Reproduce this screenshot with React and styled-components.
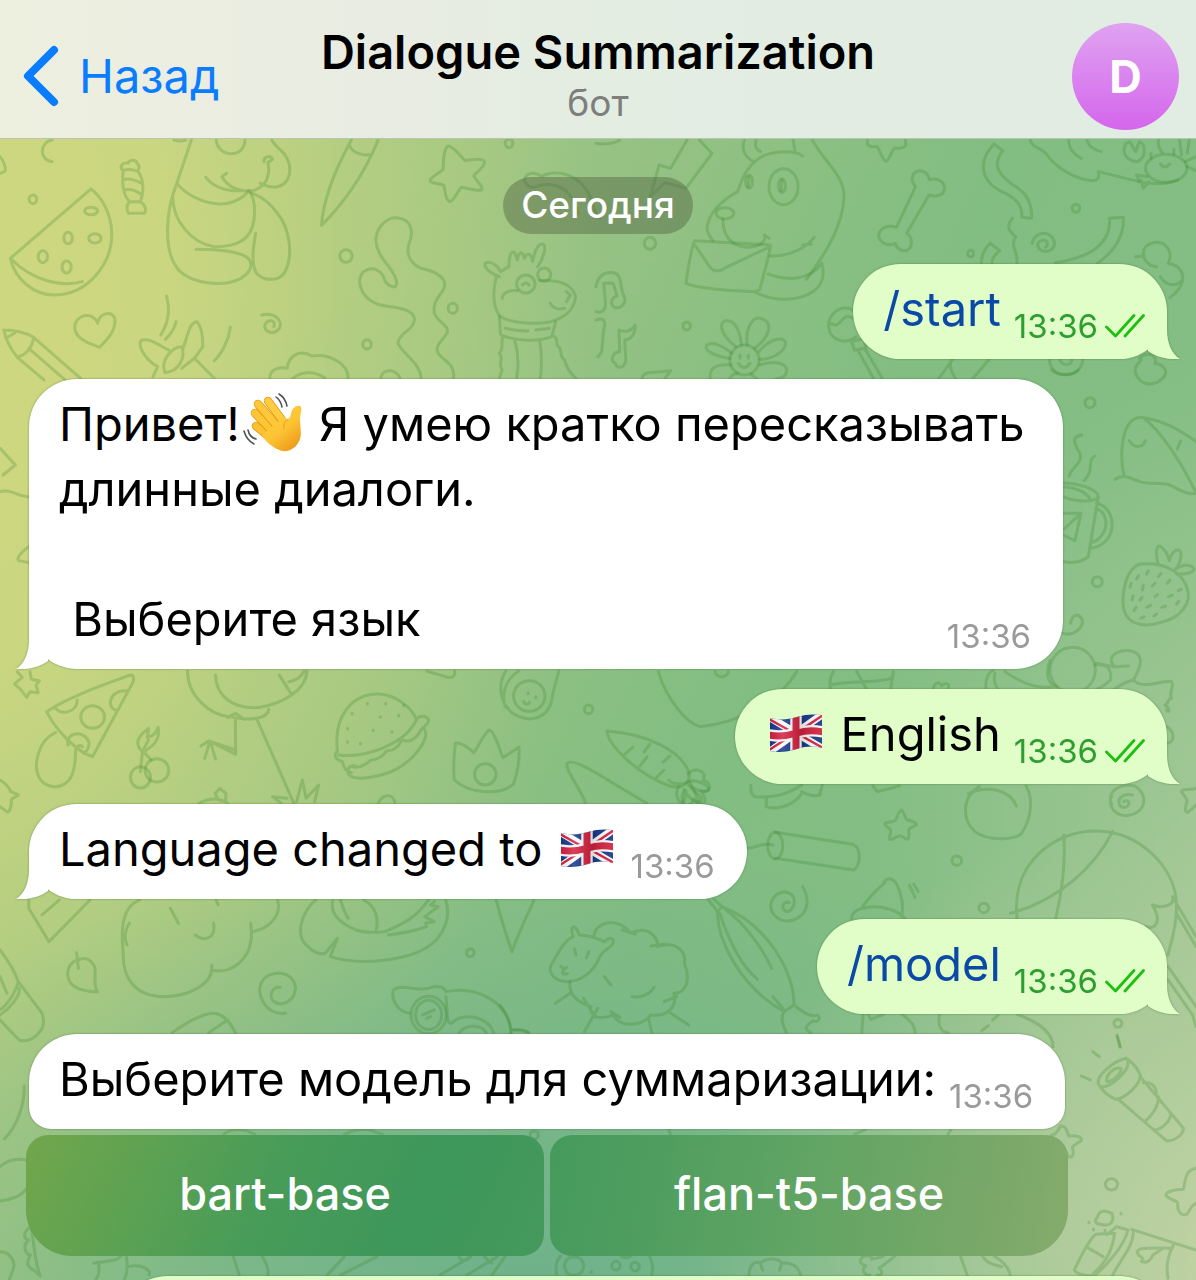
import React from "react";
import styled, { createGlobalStyle } from "styled-components";

const GlobalStyle = createGlobalStyle`
  *, *::before, *::after { box-sizing: border-box; }
  html, body { margin: 0; height: 100%; }
  body {
    font-family: Inter, Roboto, "Liberation Sans", sans-serif;
    color: #000;
    overflow: hidden;
  }
  button { font: inherit; border: 0; background: none; padding: 0; cursor: pointer; }
  p, h1 { margin: 0; }
`;

const Screen = styled.div`
  position: relative;
  display: flex;
  flex-direction: column;
  height: 100vh;
  overflow: hidden;
  background:
    radial-gradient(ellipse 50% 36% at 108% 98%, #c6d4a5 0%, rgba(190, 209, 162, 0.75) 40%, rgba(175, 205, 155, 0) 100%),
    radial-gradient(ellipse 34% 36% at 106% 64%, rgba(176, 204, 158, 0.75) 0%, rgba(165, 202, 150, 0) 100%),
    radial-gradient(ellipse 62% 36% at 44% 100%, #6fb28b 0%, rgba(120, 182, 138, 0) 100%),
    radial-gradient(ellipse 56% 86% at -6% 22%, #cfd87f 0%, #cad680 36%, rgba(190, 210, 128, 0.65) 62%, rgba(160, 199, 130, 0) 100%),
    linear-gradient(115deg, #b4ce80 0%, #98c384 36%, #82bd82 60%, #86bf86 100%);
`;

const Wallpaper = styled.svg`
  position: absolute;
  inset: 0;
  width: 100%;
  height: 100%;
  fill: none;
  stroke: rgba(55, 130, 40, 0.25);
  stroke-width: 3;
  stroke-linecap: round;
  stroke-linejoin: round;
  pointer-events: none;

  path, ellipse { vector-effect: non-scaling-stroke; }
`;

const Header = styled.header`
  position: relative;
  display: grid;
  grid-template-columns: 1fr auto 1fr;
  align-items: center;
  height: 139px;
  flex: none;
  padding: 14px 17px 0;
  background: linear-gradient(90deg, #edefdf 0%, #e9ece2 32%, #e3ede2 52%, #e1ece2 100%);
  border-bottom: 1px solid #b9c4b6;
`;

const BackButton = styled.button`
  display: flex;
  align-items: center;
  justify-self: start;
  gap: 19px;
  padding-left: 5px;
  color: #0a7cff;
  font-size: 47px;
  line-height: 60px;
`;

const TitleBlock = styled.div`
  text-align: center;
`;

const Title = styled.h1`
  font-size: 47px;
  font-weight: 600;
  line-height: 54px;
`;

const Subtitle = styled.p`
  font-size: 37px;
  line-height: 48px;
  color: #7c7f7c;
`;

const Avatar = styled.button`
  justify-self: end;
  width: 107px;
  height: 107px;
  border-radius: 50%;
  background: linear-gradient(180deg, #dfa3f1 0%, #d566ec 100%);
  color: #fff;
  font-size: 45px;
  font-weight: 700;
  line-height: 107px;
`;

const Chat = styled.main`
  position: relative;
  flex: 1;
  display: flex;
  flex-direction: column;
  align-items: flex-start;
  gap: 20px;
  min-height: 0;
  padding: 38px 29px 0;
  overflow: hidden;

  > * { flex: none; }
`;

const DatePill = styled.div`
  align-self: center;
  margin-bottom: 10px;
  padding: 0 18px;
  border-radius: 29px;
  background: rgba(86, 102, 68, 0.46);
  color: #fff;
  font-size: 37px;
  font-weight: 500;
  line-height: 56px;
  padding-bottom: 1px;
`;

const Bubble = styled.article`
  position: relative;
  display: ${(p) => (p.$long ? "grid" : "flex")};
  align-items: flex-end;
  gap: 13px;
  align-self: ${(p) => (p.$out ? "flex-end" : "flex-start")};
  max-width: ${(p) => (p.$long ? "1034px" : "100%")};
  min-height: 95px;
  padding: ${(p) => (p.$out ? "12px 22px 18px 30px" : "12px 32px 18px 30px")};
  border-radius: ${(p) => (p.$docked ? "48px 48px 22px 22px" : "48px")};
  background: ${(p) => (p.$out ? "#e1fec8" : "#fff")};
  filter: drop-shadow(0 0 1px rgba(50, 100, 40, 0.55));
`;

const NextBubble = styled(Bubble)`
  width: 92%;
`;

const Text = styled.p`
  font-size: 47px;
  line-height: 65px;
  white-space: pre-wrap;
  ${Bubble}[data-long] > & { grid-area: 1 / 1; }
`;

const Command = styled.a`
  color: #0a49a6;
  text-decoration: none;
`;

const Meta = styled.span`
  display: flex;
  align-items: center;
  gap: 7px;
  font-size: 33px;
  line-height: 30px;
  color: ${(p) => (p.$out ? "#2f9e31" : "#9a9a9a")};
  ${Bubble}[data-long] > & { grid-area: 1 / 1; justify-self: end; }
`;

const Tail = styled.svg`
  position: absolute;
  bottom: 0;
  width: 32px;
  height: 48px;
  ${(p) => (p.$out ? "right: -13px; fill: #e1fec8;" : "left: -13px; fill: #fff;")}
`;

const InlineArt = styled.svg`
  display: inline-block;
  width: ${(p) => p.$w}px;
  height: ${(p) => p.$h}px;
  vertical-align: ${(p) => p.$drop}px;
  margin: 0 ${(p) => p.$gap}px;
`;

const BotMessage = styled.div`
  display: flex;
  flex-direction: column;
  gap: 6px;
  max-width: 100%;
`;

const Keyboard = styled.div`
  display: grid;
  grid-template-columns: 1fr 1fr;
  gap: 6px;
  margin: 0 -3px;
`;

const KeyButton = styled.button`
  height: 121px;
  padding-bottom: 4px;
  color: #fff;
  font-size: 45px;
  font-weight: 500;
  border-radius: ${(p) => (p.$last ? "22px 22px 46px 22px" : "22px 22px 22px 46px")};
  background: ${(p) =>
    p.$last
      ? "linear-gradient(100deg, #459a5c 0%, #4f9e5f 20%, #63a564 52%, #73a768 75%, #85ab6c 100%)"
      : "linear-gradient(115deg, #72a64b 0%, #5ea252 22%, #499c58 45%, #3d975b 75%, #46995c 100%)"};
`;

const Checks = () => (
  <svg width="40" height="24" viewBox="0 0 40 24" fill="none" stroke="#1fbf12" strokeWidth="2.8" strokeLinecap="round" strokeLinejoin="round" aria-hidden="true">
    <path d="M1.5 13 L10.5 22 L29 1.500" />
    <path d="M20 22 L38.500 1.500" />
  </svg>
);

const BubbleTail = ({ out }) => (
  <Tail $out={out} viewBox="0 0 32 48" aria-hidden="true">
    <path d={out ? "M0 0 H19 V18 C19 33 24 43 32 48 C20 49 8 46 0 40 Z" : "M32 0 H13 V18 C13 33 8 43 0 48 C12 49 24 46 32 40 Z"} />
  </Tail>
);

const Flag = () => {
  const id = React.useId();
  const shape = "M1 4 C10 6 18 6 28 3 C37 0 45 0 53 1 V34 C45 32 37 32 28 35 C18 38 10 39 1 37 Z";
  return (
    <InlineArt $w={54} $h={39} $drop={-2} $gap={4} viewBox="0 0 54 39" role="img" aria-label="UK flag">
      <defs>
        <clipPath id={id}><path d={shape} /></clipPath>
        <linearGradient id={id + "s"} x1="0" x2="1">
          <stop offset="0" stopColor="#000" stopOpacity=".08" />
          <stop offset=".25" stopColor="#fff" stopOpacity=".14" />
          <stop offset=".6" stopColor="#000" stopOpacity=".14" />
          <stop offset="1" stopColor="#fff" stopOpacity=".08" />
        </linearGradient>
      </defs>
      <g clipPath={`url(#${id})`} fill="none">
        <rect width="54" height="39" fill="#173a8c" />
        <path d="M0 3 L54 35 M0 38 L54 0" stroke="#fff" strokeWidth="7.500" />
        <path d="M0 5 L25 19 M54 34 L29 20 M0 36 L25 20 M54 1 L29 18" stroke="#d6213f" strokeWidth="2.400" />
        <path d="M27 0 V39 M0 21 C10 23 18 22 28 19 C37 16 45 16 54 18" stroke="#fff" strokeWidth="11.500" />
        <path d="M27 0 V39 M0 21 C10 23 18 22 28 19 C37 16 45 16 54 18" stroke="#d6213f" strokeWidth="7" />
        <rect width="54" height="39" fill={`url(#${id}s)`} />
      </g>
    </InlineArt>
  );
};

const WavingHand = () => (
  <InlineArt $w={60} $h={60} $drop={-12} $gap={3} viewBox="0 0 60 60" role="img" aria-label="waving hand">
    <defs>
      <linearGradient id="skin" x1="0" y1="0" x2="0.700" y2="1">
        <stop offset="0" stopColor="#ffd044" />
        <stop offset=".6" stopColor="#fdc434" />
        <stop offset="1" stopColor="#ee9c1c" />
      </linearGradient>
    </defs>
    <g fill="none" strokeLinecap="round">
      <path d="M13 33 L30 47" stroke="#e2930f" strokeWidth="8.400" />
      <path d="M13 33 L30 47" stroke="#fbc02f" strokeWidth="7" />
      <path d="M12 20 L32 41" stroke="#e2930f" strokeWidth="8.600" />
      <path d="M12 20 L32 41" stroke="#fcc536" strokeWidth="7.200" />
      <path d="M15 11 L36 35" stroke="#e2930f" strokeWidth="8.600" />
      <path d="M15 11 L36 35" stroke="#fdc93b" strokeWidth="7.200" />
      <path d="M25 8 L42 31" stroke="#e2930f" strokeWidth="8.400" />
      <path d="M25 8 L42 31" stroke="#fecc40" strokeWidth="7" />
    </g>
    <path d="M24 38 L41 24 C45 28 47 26 48 21 C49 15 53 12 57 13 C60 15 57 20 57 27 C57 34 59 39 57 46 C54 55 46 59 39 58 C31 56 23 49 19 43 Z" fill="url(#skin)" />
    <path d="M45 26 C41 29 40 32 41 36" fill="none" stroke="#e9a11c" strokeWidth="1" strokeLinecap="round" />
    <g fill="none" stroke="#4b4e52" strokeWidth="1.500" strokeLinecap="round">
      <path d="M33 4 C36 6 38 9 39 14" />
      <path d="M36 1 C41 4 43 8 44 13" />
      <path d="M5 37 C6 42 9 45 13 46" />
      <path d="M1 38 C3 45 7 49 11 51" />
    </g>
  </InlineArt>
);

/* Each sheet holds line drawings for one part of the wallpaper, in its own units. */
const sheets = [
  {
    t: "translate(0 0) scale(.3827 .3333)",
    d: [
      "M136 420 C105 425 100 480 136 485 M0 470 C8 480 18 505 12 515 L0 520",
      "M322 512 C310 500 320 485 334 490 C340 478 355 478 358 490 C368 498 362 508 360 514 C340 505 330 508 322 512 C318 550 322 590 340 605 C330 612 330 630 336 640 L378 640 C384 628 378 612 366 606 C380 570 372 530 360 514 M322 540 C340 530 360 545 370 550 M324 570 C345 565 360 575 370 585 M340 605 H366",
      "M238 567 L27 775 C40 840 90 885 140 885 C230 885 295 790 292 695 C290 640 265 590 238 567 M27 775 C90 850 170 860 215 845",
      "M500 420 L462 550 C430 640 430 750 460 800 C490 850 580 865 630 835 C670 805 660 770 620 760 C590 750 550 748 512 748 M462 550 C490 590 540 612 575 612 C610 612 640 590 650 572 C672 600 670 680 645 710 C620 740 580 740 560 740 C500 730 450 660 452 590",
      "M668 700 C662 740 655 790 670 820 C690 845 730 845 745 815 C765 770 760 690 725 640 C705 608 685 590 655 578 M710 420 C720 440 735 450 745 465 C765 500 762 555 720 562 C700 562 690 555 680 550 M690 485 C688 468 710 465 712 478 L700 488 C706 520 700 560 660 572 C620 575 595 560 580 530 L592 520 M538 532 C560 565 600 575 640 572 M565 420 C570 475 640 475 640 420 M455 420 q15 6 30 0",
      "M918 420 C880 500 845 590 840 676 C890 620 950 530 988 420 M915 440 C925 460 950 468 968 464",
      "M1172 438 C1185 440 1205 470 1215 482 C1240 478 1265 472 1266 488 C1264 505 1240 520 1238 528 C1245 545 1265 560 1258 570 C1245 575 1215 562 1205 562 C1195 575 1185 605 1175 605 C1163 600 1163 570 1160 556 C1145 550 1122 550 1124 540 C1130 528 1150 518 1158 508 C1158 490 1160 440 1172 438",
      "M1370 540 C1375 515 1400 515 1415 530 C1450 505 1520 520 1545 600 C1555 640 1560 650 1568 655 M1400 560 C1440 545 1490 550 1510 640 M1370 540 C1375 560 1390 565 1400 560",
      "M1100 1135 C1100 1090 1050 1060 1040 1030 C1040 1000 1085 990 1083 955 C1075 920 1020 925 985 912 C940 890 930 840 950 815 C975 795 1000 815 1005 840 C1015 862 1040 870 1036 845 C1030 800 985 780 982 720 C985 670 1020 650 1040 654 C1080 660 1080 700 1068 735 C1062 760 1070 790 1100 805 C1140 815 1170 835 1160 865 C1150 890 1130 900 1135 940 C1145 970 1175 975 1168 1000 C1155 1025 1135 1035 1145 1060 C1160 1085 1190 1090 1185 1135",
      "M1305 830 C1290 825 1262 805 1268 790 C1280 780 1300 795 1308 815 M1308 815 L1330 800 C1330 770 1335 750 1345 758 L1352 780 C1355 755 1365 750 1370 775 C1378 755 1388 760 1392 785 C1395 760 1405 730 1418 732 C1430 740 1420 775 1405 800 M1297 830 C1285 880 1290 930 1308 950 C1330 968 1400 975 1440 965 C1480 950 1500 930 1504 890 C1495 850 1460 840 1410 842 M1312 895 C1315 875 1335 870 1352 872 M1480 875 L1490 885 L1480 905 M1438 910 C1445 925 1455 930 1475 925 M1365 855 q8 -12 18 0",
      "M1305 950 L1308 1005 C1350 1025 1410 1025 1442 1010 L1452 965 M1320 985 C1350 993 1370 993 1380 993 M1400 990 L1435 985 M1315 1010 C1305 1030 1320 1040 1305 1060 C1318 1075 1300 1095 1312 1110 L1305 1135 M1345 1020 C1355 1060 1355 1100 1350 1135 M1410 1020 C1416 1060 1416 1100 1412 1135 M1450 1010 C1460 1020 1450 1035 1460 1040 C1470 1050 1460 1070 1475 1080 C1480 1100 1490 1120 1505 1135",
      "M255 970 C245 935 200 940 195 980 C195 1015 230 1030 260 1042 C280 1020 305 990 300 955 C290 930 260 940 255 970",
      "M684 945 C720 935 740 965 730 985 C718 1005 690 1000 692 975 C700 955 722 960 716 980",
      "M10 990 C40 990 70 1000 88 1012 C85 1040 70 1065 45 1072 C30 1050 15 1020 10 990 M88 1012 L215 1140 M45 1072 L115 1140 M75 1045 L170 1140 M15 1015 L38 1000",
      "M400 1130 L412 1100 C380 1080 360 1040 368 1022 C390 1010 420 1040 440 1050 M430 1115 C420 1080 450 1040 475 1040 C485 1070 470 1115 430 1118 M478 1045 C490 1010 495 965 515 965 C530 985 530 1030 530 1040 L508 1075 L475 1105 M508 1075 L560 1135 M435 888 C445 930 440 970 420 1005 M460 965 C455 990 445 1005 432 1018 M602 982 C598 1020 580 1060 560 1082",
      "M705 1135 C705 1110 725 1100 750 1105 C755 1060 790 1050 815 1068 C860 1060 910 1090 910 1135 M765 1135 C785 1115 820 1110 850 1135 M995 1135 C1000 1100 1040 1110 1045 1135",
    ],
    e: [[86, 598, 10, 13], [238, 633, 17, 11], [178, 714, 11, 17], [248, 715, 16, 14], [112, 770, 12, 18], [174, 801, 12, 18], [1330, 430, 10, 13], [904, 768, 16, 19], [1183, 925, 12, 15], [959, 1033, 11, 14], [1374, 852, 24, 27], [1422, 824, 17, 20]],
  },
  {
    t: "translate(596 0) scale(.3827 .3333)",
    d: [
      "M0 430 C20 435 50 430 62 420 M238 420 L195 505 L165 495 L142 590 M270 420 L303 460 L235 565 L180 548 L142 590",
      "M540 468 C520 450 450 450 420 480 C385 510 375 560 370 575 C330 600 290 640 290 690 C295 705 300 715 305 722 M332 657 C330 700 350 740 395 742 C430 740 445 725 440 705 L452 715 M455 768 C500 770 550 745 570 712 M540 735 L562 732 M565 420 C600 490 650 530 648 590 C645 680 600 760 550 838 M412 485 C385 470 380 440 388 420 M430 455 C415 445 415 435 418 420 M515 420 L520 452 M400 530 L398 560 M486 540 L484 572",
      "M258 722 L455 735 C460 735 430 860 428 868 C424 875 400 875 380 873 C330 870 260 862 235 850 C240 810 250 740 258 722 M258 735 L300 805 C312 818 330 812 340 802 L455 740 M450 822 C500 845 560 840 590 790 C600 830 590 870 540 890 C500 905 450 898 415 876",
      "M710 420 C705 440 715 440 735 440 C745 460 750 484 758 484 C768 480 770 455 780 445 C800 445 815 445 808 420",
      "M835 560 C820 540 825 515 845 512 C865 512 870 530 872 540 C895 530 915 550 910 570 C905 590 885 590 870 585 L812 700 C825 710 830 735 815 750 C800 757 785 745 782 730 C765 740 740 730 738 705 C745 680 765 675 785 682 Z",
      "M1040 432 L1063 452 C1030 500 1060 530 1090 555 C1130 580 1140 620 1138 655 L1113 652 C1115 610 1090 590 1060 575 C1000 540 1000 480 1040 432",
      "M1135 420 C1135 440 1165 445 1175 460 C1200 500 1250 540 1300 542 C1315 540 1315 525 1312 515 L1420 545 M1235 420 C1235 445 1250 465 1268 475 M1283 420 C1285 435 1300 450 1320 455",
      "M1385 430 C1370 460 1390 485 1415 485 C1440 470 1435 430 1420 425 L1410 455 L1395 425 Z M1475 492 q12 18 24 0 M1540 485 L1568 470 M1545 500 L1568 512 M1440 530 L1412 525 L1420 545 M1425 540 L1430 565 L1445 545 M1420 545 C1460 555 1490 555 1520 540 M1550 420 L1545 460 M1470 420 C1465 440 1475 450 1480 458 M1525 420 l5 45 M1450 475 v-15 M1510 462 v-15",
      "M1342 655 L1378 652 C1380 700 1360 750 1310 790 M1342 655 C1345 720 1310 770 1200 788 M1088 655 C1070 680 1080 695 1097 710 C1080 740 1105 760 1100 788 M1030 730 L1055 752 C1040 765 1035 775 1035 790 M1030 730 C1015 745 1008 765 1007 788",
      "M1140 730 C1145 690 1195 690 1198 730 C1195 765 1150 760 1155 730 C1165 710 1190 725 1175 742",
      "M1465 800 C1430 800 1415 745 1450 730 C1490 715 1510 760 1495 790 C1540 800 1550 850 1500 893 M1410 770 L1432 768 M1475 830 C1490 860 1520 860 1532 840",
      "M0 860 C5 830 20 815 45 818 C70 822 60 860 75 895 C78 915 60 930 45 920 C35 905 45 890 55 888 L45 850 L20 850 L25 910 C25 935 10 940 0 935 M0 960 C25 950 25 970 20 990 C15 1030 20 1060 5 1070 M50 1090 C35 1080 45 1055 62 1055 L60 990 C80 1000 95 990 102 975 C105 1000 90 1020 75 1020 L78 1080 C75 1105 55 1108 50 1090 M120 1135 C125 1110 150 1120 195 1112 L180 1135",
      "M365 1040 C320 1000 320 960 345 962 C370 965 378 1010 380 1035 M395 1035 C390 980 410 950 430 955 C465 965 455 1010 415 1045 M425 1055 C460 1010 495 1010 495 1030 C495 1060 450 1080 428 1078 M428 1095 C470 1080 500 1090 498 1115 C495 1135 480 1136 470 1136 M350 1075 C310 1070 280 1050 290 1035 C310 1020 345 1050 355 1060 M352 1095 C315 1090 295 1105 298 1136 M370 1120 q-20 5 -20 16 M405 1122 l15 14 M372 1090 q15 25 30 0 M376 1065 v10 M398 1065 v10",
      "M690 985 C690 920 650 915 625 935 C600 960 600 1010 640 1022 C655 1025 670 1020 680 1010 M612 970 C640 990 640 945 660 950 C672 955 680 960 688 955 M668 1025 L700 1015 L705 1045 L675 1050 Z M685 1052 L725 1135 M702 1045 L748 1135",
      "M895 1135 C915 1110 925 1085 935 1075 M930 1075 C920 1100 930 1120 940 1135 M1030 1075 L985 1135 M1185 1077 C1185 1140 1270 1140 1272 1077 M1212 1077 C1215 1100 1245 1100 1243 1077 M1420 1075 C1440 1050 1470 1070 1460 1090 C1490 1095 1495 1120 1480 1135 C1460 1160 1430 1155 1418 1136 C1405 1120 1405 1100 1425 1080",
    ],
    e: [[337, 640, 23, 17], [490, 560, 38, 54], [400, 545, 9, 20], [486, 557, 9, 21], [141, 730, 15, 18], [237, 978, 10, 12], [979, 761, 8, 10], [1254, 625, 10, 12], [1490, 505, 54, 42], [388, 1080, 38, 45]],
  },
  {
    t: "translate(0 370) scale(.3827 .3333)",
    d: ["M0 235 L40 285 L8 315 M0 365 C30 355 45 380 75 380 M75 530 C55 545 40 570 50 572 L75 578"],
    e: [],
  },
  {
    t: "translate(700 370) scale(.3333)",
    d: [
      "M1055 0 C1070 18 1120 18 1135 0",
      "M1145 195 C1110 200 1125 225 1140 250 C1150 280 1115 290 1108 318 M1185 258 C1160 270 1185 300 1152 332",
      "M1089 338 C1130 340 1190 355 1195 378 C1190 400 1120 395 1089 380 M1089 350 C1130 352 1165 370 1172 392 M1195 380 L1165 560 C1145 578 1110 580 1089 575 M1190 398 C1260 420 1250 530 1168 535 M1187 415 C1235 430 1225 505 1172 518 M1089 430 L1143 430 L1125 512 L1089 495 M1143 430 L1089 480",
      "M1272 318 C1260 260 1260 150 1320 142 C1390 150 1440 180 1488 215 M1330 142 C1400 200 1450 290 1488 368 M1245 328 C1270 310 1290 325 1320 335 C1350 345 1380 335 1410 345 C1440 360 1460 375 1488 370 M1288 212 C1300 235 1330 235 1336 212 M1442 213 L1432 237",
      "M1320 582 C1270 600 1265 690 1272 720 C1285 770 1340 770 1380 758 C1440 745 1480 700 1460 650 C1445 610 1400 575 1320 582 M1375 582 C1365 550 1370 525 1380 528 C1400 540 1405 560 1408 572 C1415 545 1435 530 1443 548 C1445 570 1435 590 1425 598 C1450 580 1480 582 1482 600 C1470 615 1445 612 1430 612",
      "M1310 627 l6 -10 M1340 612 l5 -9 M1375 620 l8 -9 M1290 652 l4 -12 M1327 660 l3 -14 M1357 648 l8 -8 M1402 640 l8 -10 M1297 690 l2 -12 M1320 690 l6 -8 M1365 680 l8 -6 M1405 680 l12 -4 M1435 662 l8 -4 M1302 722 l6 -10 M1340 712 l12 -6 M1385 712 l12 -4 M1430 702 l6 -8 M1322 745 l10 -4 M1362 738 l8 -6",
      "M1089 790 C1120 800 1150 775 1147 750 C1135 725 1115 735 1112 760 M1185 885 C1225 880 1235 900 1232 930 C1215 945 1200 955 1190 958 M1190 880 L1240 890 L1285 888 M1240 885 C1220 860 1250 840 1290 842 C1330 850 1330 880 1300 930 C1260 940 1250 955 1240 960 M1300 930 C1330 960 1380 930 1415 935 C1425 950 1405 965 1415 985 C1400 985 1410 1000 1395 1005 C1415 1020 1405 1030 1400 1020 M1050 870 C1040 900 1035 940 1070 950 M1400 1070 C1425 1085 1425 1115 1402 1120 M915 905 C950 930 1000 960 1060 950",
      "M858 958 C855 930 865 905 880 902 M885 910 C880 930 885 945 895 958 M400 905 C385 930 390 950 392 958 M390 945 C450 930 530 940 575 925 M470 905 L500 958 M580 905 L572 958 M700 955 C705 935 720 935 725 948 C735 935 750 940 745 956 M45 905 C50 925 80 925 85 905 M290 905 C240 990 120 1060 0 1070 C-40 1060 -100 990 -125 905",
    ],
    e: [[1170, 98, 15, 15], [1192, 635, 15, 15], [1118, 900, 68, 68]],
  },
  {
    t: "translate(600 720)",
    d: [
      "M7 11 C8 25 38 55 70 66 C84 70 92 62 88 50 C80 32 50 14 7 11 M24 35 l9 -8 M40 46 l7 -9 M56 58 l8 -8 M50 24 l-6 8 M70 36 l-7 6",
      "M88 54 C96 46 108 52 103 60 C114 64 110 74 101 71 C110 82 102 90 94 79 C88 92 78 84 84 70 M90 62 L100 84",
    ],
    e: [],
  },
  {
    t: "translate(0 660) scale(.3827 .3333)",
    d: [
      "M45 35 L58 52 L38 72 L52 86 L70 112 L78 95 L100 98 L94 76 L103 62 L82 58 L78 35",
      "M122 155 C180 110 270 75 340 45 C352 45 350 60 346 70 L242 290 C200 275 145 210 122 155 M145 145 C160 165 200 160 202 120 M330 92 C280 90 280 150 305 150 M178 255 C170 215 220 210 232 245 C235 265 225 275 218 280 M145 218 C100 240 90 310 98 340 C110 390 170 395 188 345 C200 310 195 290 198 270 C200 255 210 255 215 260",
      "M367 335 L372 275 C350 250 360 230 388 205 L385 232 C400 228 410 215 413 202 C420 240 400 260 375 275 L395 300 M372 275 L388 240",
      "M490 33 C490 110 550 165 600 170 C640 182 700 180 702 148 M563 45 C565 110 610 150 680 142 C740 130 800 90 802 33 M755 65 C780 60 790 45 795 33 M760 100 L730 45 M615 180 L616 283 L550 245 M616 270 L545 243 L525 258 M548 245 L535 295 M550 245 L563 297 M595 172 L615 160 L638 178 M672 180 L768 430",
      "M735 430 L712 410 L750 415 M775 425 L790 360 L800 415 L833 375 L822 425 M520 430 C545 415 570 410 595 430 M562 400 L575 385 L590 400 L590 425 L570 420 Z M988 430 C1000 400 1030 400 1032 430",
      "M882 275 C870 170 920 100 990 102 C1040 105 1080 150 1088 180 C1060 250 960 295 885 285 M1088 178 C1095 165 1115 165 1120 180 C1120 195 1105 200 1100 210 C1090 235 1070 250 1050 240 C1040 260 1030 275 1010 272 C1005 285 985 300 970 300 C950 320 935 325 920 320 M880 275 C870 290 880 300 895 305 C898 325 905 335 918 338 M1108 205 C1125 230 1090 290 1040 325 C1000 350 930 365 912 345 C905 330 910 315 930 318",
      "M960 130 v2 M1008 130 v2 M920 160 v2 M994 170 v2 M1042 165 v2 M908 205 v2 M975 210 v2 M1024 215 v2 M908 245 v2 M942 250 v2 M1055 135 v2",
      "M1190 250 C1185 290 1185 330 1187 360 C1230 405 1310 405 1342 372 C1352 340 1358 300 1356 262 L1314 293 C1305 265 1290 210 1278 210 C1265 220 1250 260 1238 278 C1225 262 1200 245 1190 250",
      "M1322 33 C1300 70 1305 130 1340 160 C1380 190 1430 180 1442 120 C1445 90 1455 60 1460 33 M1355 33 C1320 60 1310 100 1320 140 M1115 33 L1170 52 C1185 55 1190 45 1188 33 M1368 125 q8 14 16 2 M1380 98 v3 M1400 110 v3",
      "M1530 430 C1520 390 1475 330 1482 310 C1500 290 1570 350 1690 430 M0 360 C15 370 25 385 28 395 L48 405 L30 418 C30 440 25 455 20 457 L0 440",
      "M75 720 L75 745 L128 845 L235 720 M110 765 L155 720 M200 878 L205 925 M210 897 C175 905 170 945 185 970 C200 990 230 995 255 996 C240 975 255 930 245 915 C235 897 222 893 210 897",
      "M365 720 C320 740 315 800 322 880 C320 950 350 1010 430 1010 C490 1010 550 975 553 930 C600 945 660 900 657 815 C700 810 730 770 728 735 L725 720 M655 790 L657 815 M553 915 L553 935 M338 790 C325 810 325 840 332 855 M445 745 L466 790 M510 825 C530 845 565 840 558 790 M565 720 L570 735",
      "M746 1060 C690 1065 670 1000 682 970 C700 925 770 930 772 985 C768 1040 710 1045 708 1005 C710 985 725 980 732 982",
      "M825 720 C785 760 770 830 805 860 C830 890 845 880 850 880 L882 835 L863 890 C930 915 1080 910 1140 840 C1170 800 1175 760 1165 720 M870 720 C860 760 890 790 930 810 C960 820 1000 820 1015 810 C1080 780 1100 750 1120 720 M890 720 C895 740 900 760 910 775 M950 720 C985 740 990 780 982 815 M1015 825 C1050 820 1080 815 1115 800 L1112 790 L1135 785 L1110 770 L1145 740 L1125 735 L1135 725",
      "M1297 722 C1310 780 1330 850 1338 875 C1350 830 1380 760 1395 722",
      "M0 870 C20 900 40 940 48 965 L110 1060 C115 1080 115 1095 110 1105 C95 1135 70 1148 50 1140 L0 1080 M0 950 L18 1000 M48 965 C40 1000 15 1040 0 1050 M50 985 C55 1010 20 1050 0 1065 M450 1118 C490 1085 530 1060 560 1060 C590 1065 605 1095 615 1118 M595 1080 L545 1118",
      "M1070 1060 C1040 1055 1020 1020 1028 990 C1050 970 1090 995 1120 985 C1140 975 1160 980 1165 995 C1250 975 1330 1030 1335 1118 M1165 1010 C1170 1050 1165 1095 1180 1090 C1200 1060 1270 1060 1290 1118 M1200 1118 C1220 1090 1260 1095 1270 1118 M1340 1110 C1360 1110 1375 1115 1380 1118 M1105 1065 L1135 1050 M1115 1075 L1125 1070",
    ],
    e: [[242, 171, 31, 34], [367, 352, 26, 32], [410, 331, 31, 35], [1268, 343, 28, 32], [1383, 108, 41, 46], [1538, 148, 11, 13], [1229, 878, 10, 12], [1120, 1065, 46, 56], [1120, 1065, 34, 44]],
  },
  {
    t: "translate(500 780) scale(.4439 .3333)",
    d: [
      "M380 0 C390 15 410 15 425 5 C440 -5 470 15 470 30 C460 40 440 30 425 15 C440 40 460 50 452 65 C440 70 420 50 418 30 C420 50 415 65 410 70 C395 60 395 30 405 15",
      "M565 15 C565 30 565 45 575 50 C620 55 650 40 680 15 M680 35 C690 45 710 50 720 45 L726 15 M680 40 C660 80 620 90 600 80 L600 55 M840 18 L850 35 L900 18",
      "M1080 20 C1040 50 1040 120 1070 155 C1100 185 1160 180 1175 160 C1200 110 1200 50 1185 18 M1055 40 C1100 15 1150 30 1163 78",
      "M1378 75 C1365 30 1400 10 1430 18 C1460 40 1460 100 1410 107 C1375 105 1370 60 1378 50 M1425 45 C1390 35 1385 85 1408 82 C1425 75 1415 55 1405 65",
      "M905 90 C910 95 912 115 917 120 C925 122 938 125 938 135 C930 140 920 145 920 152 C922 165 922 178 917 178 C910 175 905 165 900 168 C890 170 885 180 878 178 C876 168 882 155 880 148 C875 142 866 138 867 130 C872 124 885 128 890 122 C895 115 898 90 905 90",
      "M555 205 C580 205 590 185 615 195 M620 157 L795 193 C812 200 815 250 798 270 L620 235",
      "M1165 415 C1150 250 1250 150 1345 153 C1440 155 1520 260 1524 370 C1525 450 1510 490 1505 525 M1270 165 C1275 250 1265 340 1252 415 M1380 155 C1340 260 1260 360 1150 400 M1470 375 C1500 390 1520 370 1515 350 L1568 470 M1470 375 C1490 420 1480 450 1455 440 M1524 400 L1568 500 M1505 560 L1568 680 M1505 600 L1560 705 L1568 740 M1568 25 C1560 30 1535 25 1535 35 L1548 60 C1545 80 1540 95 1550 97 L1568 75",
      "M682 320 C710 390 670 430 640 422 C600 410 600 345 640 335 C675 340 665 395 645 395 C630 385 640 360 652 368",
      "M865 310 C865 295 885 290 892 310 M867 308 C840 340 825 360 815 385 C790 395 792 415 792 418 M892 308 C905 340 910 380 905 410 M815 385 C860 370 900 395 912 415 M922 315 L935 352 M932 312 L942 335",
      "M470 360 L490 395 L500 380 L482 358 M490 395 C490 480 540 620 640 695 L662 675 C665 580 600 430 500 380 M495 400 C515 480 545 560 580 598 M505 385 C550 430 590 500 612 565 M615 650 L640 690 M640 695 C630 720 640 740 645 758 M662 675 C680 695 700 715 715 705 C725 715 715 730 705 722 C680 745 690 750 700 758",
      "M165 470 C155 440 170 425 178 465 C200 465 220 475 235 485 C250 465 262 480 252 495 C240 510 230 515 225 530 C210 580 180 605 150 605 C115 600 105 570 120 545 C130 520 145 480 165 470 M168 507 l3 18 M200 515 l-5 18 M137 558 L145 568 L150 562 M145 568 C135 580 145 585 152 580",
      "M212 465 C215 430 260 405 295 460 C330 435 355 465 355 500 C400 480 420 520 415 550 C430 600 420 640 392 640 C400 690 370 710 340 705 C320 740 270 745 255 705 C210 730 200 690 205 680 C160 660 155 630 158 605 M275 450 L305 462 M340 498 L372 492 M235 590 L250 615 M298 650 C320 655 340 640 347 622 M370 665 L398 650 M158 640 L125 670 M220 685 L190 755 M335 718 L342 758 M385 700 L425 735 M188 655 L215 712 M250 695 L270 712",
      "M0 675 C15 700 25 730 25 758 M25 750 C50 745 60 752 65 758 M818 703 L815 758 M830 703 L835 718 L865 703 M905 703 C925 720 935 740 935 758 M990 703 C985 740 995 758 1010 758 M1165 703 C1220 730 1245 760 1246 800 M1085 752 L1100 737 M1110 720 L1122 706 M1390 765 L1397 800",
    ],
    e: [[620, 197, 17, 40], [1029, 242, 11, 14], [1090, 384, 11, 14], [1392, 730, 9, 12]],
  },
  {
    t: "translate(0 1020) scale(.3827 .3333)",
    d: [
      "M63 198 C65 250 45 320 12 356 M0 440 C20 420 45 415 68 420 M0 543 C30 540 60 525 70 505 M80 620 C55 640 65 660 75 660 C55 680 70 705 80 705 C65 730 75 745 88 750 L105 768 M82 625 C90 680 90 720 105 768 M0 695 C30 695 40 730 35 745 L25 778",
      "M245 730 L300 720 C310 715 315 712 315 708 M258 730 C260 750 258 770 250 778 M330 708 C335 740 330 770 325 778 M335 740 C370 730 395 750 390 765 M610 710 L625 765 M685 710 C700 735 702 750 700 765 M855 765 L900 710 M890 765 L985 710 M1150 765 L1230 710 M1200 710 C1200 720 1215 725 1225 715 M1300 710 L1220 765 M1320 710 L1285 765 M1265 710 L1285 730 M1455 765 C1450 740 1455 720 1465 708 M1545 755 v2",
      "M585 343 C600 325 640 325 665 343 M900 343 C920 330 950 325 965 330 L1000 343",
    ],
    e: [[1500, 738, 25, 28], [1396, 345, 11, 12]],
  },
  {
    t: "translate(596 1020) scale(.3827 .3333)",
    d: [
      "M145 765 C152 740 145 720 140 708 M68 710 q10 6 22 0 M400 765 C400 735 415 720 430 730 C445 710 480 715 485 730 C510 725 530 740 535 765 M430 730 L435 750 M485 730 L480 750 M780 710 L740 745 C755 760 740 770 735 765 M720 710 C690 700 680 730 705 738 C690 750 705 768 715 765 M720 718 L750 710 M952 708 L970 765 M1010 708 C1020 730 1040 735 1060 740 M1040 708 C1065 725 1080 745 1082 765 M675 343 L705 328 M920 343 L928 328 M195 343 L190 328",
      "M1385 115 C1350 125 1310 165 1312 190 C1320 210 1340 230 1358 238 C1385 235 1425 190 1422 165 C1415 145 1400 125 1385 115 M1390 125 C1395 150 1345 205 1320 200 M1335 185 C1330 165 1355 140 1372 145 C1372 165 1350 185 1335 185 M1365 238 L1490 362 C1510 365 1535 345 1535 325 L1422 170 M1430 188 C1450 185 1465 200 1464 222 M1470 230 C1470 260 1450 290 1436 302 M1502 282 C1500 305 1480 325 1462 330 M1268 168 L1292 180 M1298 95 L1315 110 M1362 50 L1370 82",
      "M1190 345 C1205 345 1205 330 1215 318 C1230 315 1232 340 1235 348 C1255 345 1270 350 1268 362 C1255 372 1248 375 1245 382 C1250 405 1245 415 1235 410 L1228 395",
      "M1568 445 C1540 450 1540 480 1535 508 C1510 510 1485 515 1490 528 C1500 540 1515 540 1520 548 C1518 575 1530 590 1545 582 C1552 570 1555 555 1568 550",
      "M1310 592 C1315 570 1330 570 1348 580 C1355 600 1345 615 1335 615 C1315 615 1295 610 1310 592 M1288 606 v2 M1372 580 v2 M1300 627 v2 M1330 630 v2",
      "M1250 750 C1270 700 1290 660 1305 643 L1355 640 M1280 680 L1325 710 M1335 645 L1360 620 L1390 630 C1380 680 1330 740 1305 765 M1355 640 C1350 690 1330 730 1300 760 M1403 630 C1410 670 1370 720 1350 765 M1400 628 L1568 690 M1415 700 C1410 685 1430 682 1505 685 L1510 672 M1505 685 C1490 720 1490 750 1495 775 M1415 700 C1420 715 1435 710 1425 725 C1440 730 1450 720 1455 705 L1478 688 M1250 750 C1255 765 1290 770 1305 765",
    ],
    e: [[52, 737, 11, 13], [102, 740, 11, 13], [1347, 493, 16, 17]],
  },
];

const Doodles = () => (
  <Wallpaper viewBox="0 0 1196 1280" preserveAspectRatio="xMidYMin slice" aria-hidden="true">
    {sheets.map((s) => (
      <g key={s.t} transform={s.t}>
        {s.d.map((d) => <path key={d} d={d} />)}
        {s.e.map(([cx, cy, rx, ry]) => <ellipse key={`${cx}-${cy}-${rx}`} cx={cx} cy={cy} rx={rx} ry={ry} />)}
      </g>
    ))}
  </Wallpaper>
);

const Message = ({ out, long, docked, children }) => (
  <Bubble $out={out} $long={long} $docked={docked} data-long={long ? "" : undefined}>
    {!docked && <BubbleTail out={out} />}
    <Text>{children}</Text>
    <Meta $out={out}>
      <time dateTime="13:36">13:36</time>
      {out && <Checks />}
    </Meta>
  </Bubble>
);

export default function App() {
  return (
    <Screen>
      <GlobalStyle />
      <Doodles />
      <Header>
        <BackButton type="button">
          <svg width="38" height="62" viewBox="0 0 38 62" fill="none" stroke="currentColor" strokeWidth="8" strokeLinecap="round" strokeLinejoin="round" aria-hidden="true">
            <path d="M32 5 L6 31 L32 57" />
          </svg>
          Назад
        </BackButton>
        <TitleBlock>
          <Title>Dialogue Summarization</Title>
          <Subtitle>бот</Subtitle>
        </TitleBlock>
        <Avatar type="button">D</Avatar>
      </Header>
      <Chat>
        <DatePill>Сегодня</DatePill>
        <Message out><Command href="#start">/start</Command></Message>
        <Message long>
          Привет!<WavingHand />{" Я умею кратко пересказывать "}{"длинные диалоги."}{"\n\n Выберите язык"}
        </Message>
        <Message out><Flag /> English</Message>
        <Message>Language changed to <Flag /></Message>
        <Message out><Command href="#model">/model</Command></Message>
        <BotMessage>
          <Message docked>Выберите модель для суммаризации:</Message>
          <Keyboard>
            <KeyButton type="button">bart-base</KeyButton>
            <KeyButton type="button" $last>flan-t5-base</KeyButton>
          </Keyboard>
        </BotMessage>
        <NextBubble $out />
      </Chat>
    </Screen>
  );
}
